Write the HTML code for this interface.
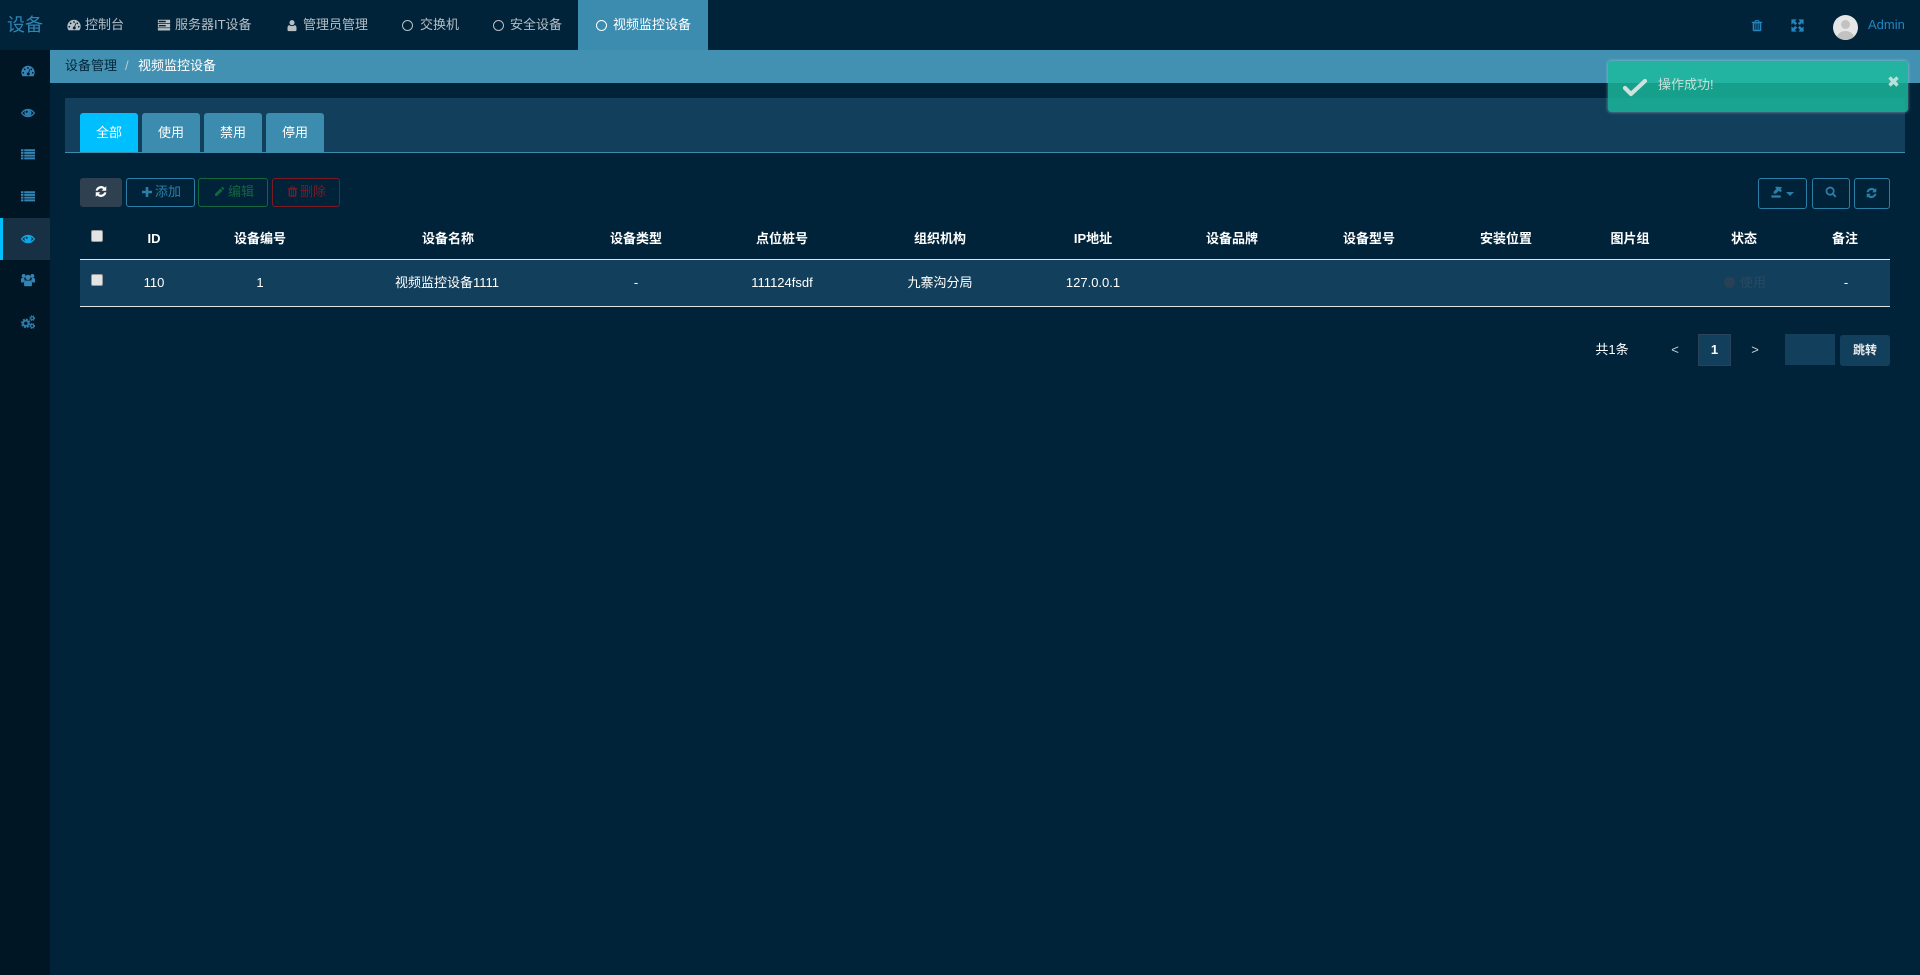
<!DOCTYPE html>
<html lang="zh"><head><meta charset="utf-8"><title>视频监控设备</title>
<style>
*{box-sizing:border-box}
html,body{margin:0;padding:0;width:1920px;height:975px;overflow:hidden;background:#00233a;font:13px/18px "Liberation Sans","Noto Sans CJK SC",sans-serif;color:#fff}
.a{position:absolute}
.t{position:absolute;white-space:nowrap}
.c{position:absolute;white-space:nowrap;transform:translateX(-50%)}
svg{position:absolute;fill:currentColor;display:block}
.th{font-weight:700;top:230px}
.td{top:274px}
.btn{position:absolute;border:1px solid;border-radius:3px;height:29px}
.tab{position:absolute;top:113px;height:39px;width:58px;background:#3c8cb0;border-radius:3px 3px 0 0;text-align:center;line-height:39px}
.cb{position:absolute;width:12px;height:12px;left:91px;background:#e4e4e4;border:1px solid #999;border-radius:2px}
.nv{position:absolute;top:16px;color:#b5bfc4;white-space:nowrap}
.ring{position:absolute;width:11px;height:11px;border:1.5px solid #b5bfc4;border-radius:50%;top:20px}
</style></head><body>
<svg width="0" height="0" style="position:absolute"><defs>
<symbol id="gauge" viewBox="0 0 16 16"><path fill-rule="evenodd" d="M8 2A7.6 7.6 0 0 0 .4 9.6c0 1.5.4 2.800 1.100 3.900.2.3.5.5.9.5h11.200c.4 0 .7-.2.9-.5.7-1.100 1.100-2.400 1.100-3.900A7.600 7.600 0 0 0 8 2zM8 3.600a1 1 0 1 1 0 2 1 1 0 0 1 0-2zM4.200 5.200a1 1 0 1 1 0 2 1 1 0 0 1 0-2zM11.800 5.200a1 1 0 1 1 0 2 1 1 0 0 1 0-2zM2.600 9a1 1 0 1 1 0 2 1 1 0 0 1 0-2zM13.400 9a1 1 0 1 1 0 2 1 1 0 0 1 0-2zM9.800 5.800l.8.3L9.300 10a1.700 1.700 0 1 1-1-.3z"/></symbol>
<symbol id="eye" viewBox="0 0 16 16"><path d="M.8 8C2.600 5.300 5 3.900 8 3.900s5.400 1.400 7.200 4.100c-1.800 2.700-4.200 4.100-7.200 4.100S2.600 10.700.8 8z" fill="none" stroke="currentColor" stroke-width="1.500"/><path fill-rule="evenodd" d="M8 3.800a4.100 4.100 0 1 1 0 8.200 4.100 4.100 0 0 1 0-8.200zM6.500 5.400a1.200 1.200 0 1 0 0 2.400 1.200 1.200 0 0 0 0-2.400z"/></symbol>
<symbol id="list" viewBox="0 0 16 16"><path d="M0 2.500h2.800v2.300H0zM3.700 2.500H16v2.300H3.700zM0 5.600h2.800v2.300H0zM3.700 5.600H16v2.300H3.700zM0 8.700h2.800V11H0zM3.700 8.700H16V11H3.700zM0 11.800h2.800v2.300H0zM3.700 11.800H16v2.300H3.700z"/></symbol>
<symbol id="users" viewBox="0 0 16 16"><circle cx="3" cy="3.400" r="2.200"/><circle cx="13" cy="3.400" r="2.200"/><circle cx="8" cy="5" r="3"/><path d="M0 7.300c0-1 .6-1.600 1.500-1.600h2c.1 1.100.6 2 1.400 2.600-1 .5-1.700 1.400-1.800 2.500H.8C.3 10.800 0 10.500 0 10zM16 7.300c0-1-.6-1.600-1.500-1.600h-2c-.1 1.100-.6 2-1.400 2.600 1 .5 1.700 1.400 1.800 2.500h2.800c.5 0 .8-.3.8-.8zM5.500 8.500h5c1.200 0 2 .8 2 2v3.500c0 .7-.5 1.200-1.200 1.200H4.700c-.7 0-1.200-.5-1.200-1.200v-3.500c0-1.200.8-2 2-2z"/></symbol>
<symbol id="cogs" viewBox="0 0 16 16"><g fill="none" stroke="currentColor"><circle cx="5.500" cy="9.500" r="3" stroke-width="2.200"/><circle cx="5.500" cy="9.500" r="4.600" stroke-width="1.800" stroke-dasharray="2.300 1.300"/><circle cx="12.800" cy="3.600" r="1.700" stroke-width="1.300"/><circle cx="12.800" cy="3.600" r="2.700" stroke-width="1.200" stroke-dasharray="1.300 .9"/><circle cx="12.800" cy="12.500" r="1.700" stroke-width="1.300"/><circle cx="12.800" cy="12.500" r="2.700" stroke-width="1.200" stroke-dasharray="1.300 .9"/></g></symbol>
<symbol id="trash" viewBox="0 0 16 16"><path fill-rule="evenodd" d="M5.500 .8h5l1 2.200H15v1.700h-1.300V14c0 .9-.6 1.600-1.300 1.600H3.600c-.7 0-1.300-.7-1.300-1.600V4.700H1V3h3.500zM6.300 2.200 6 3h4l-.3-.8zM4.400 5.200V13.700h1.500V5.200zM7.200 5.200v8.500h1.600V5.200zM10.100 5.200v8.500h1.500V5.200z"/></symbol>
<symbol id="expand" viewBox="0 0 16 16"><path d="M.5.500h6.500L4.900 2.600 7.500 5.200 5.200 7.500 2.600 4.900.5 7zM15.500.500V7l-2.100-2.100-2.600 2.600-2.300-2.300 2.600-2.600L9 .5zM.5 15.500V9l2.100 2.100 2.600-2.600 2.300 2.300-2.600 2.600L7 15.500zM15.500 15.500H9l2.100-2.100-2.600-2.600 2.300-2.300 2.600 2.600L15.500 9z"/></symbol>
<symbol id="server" viewBox="0 0 16 16"><path fill-rule="evenodd" d="M1 2h14v4H1zM2 3.200v1.600h8V3.200zM1 6.800h14v4H1zM2 8v1.600h8V8zM1 11.600h14v2.700H1z"/></symbol>
<symbol id="user" viewBox="0 0 16 16"><circle cx="8" cy="4.200" r="3.400"/><path d="M4.300 7.500C5.300 8.300 6.600 8.800 8 8.800s2.700-.5 3.700-1.300c1.400.3 2.300 1.700 2.300 3.700v2.800c0 1-.7 1.500-1.500 1.500h-9c-.8 0-1.500-.5-1.500-1.500v-2.800c0-2 .9-3.400 2.300-3.700z"/></symbol>
<symbol id="sync" viewBox="0 0 16 16"><path d="M15 .8v6.200H8.800l2.200-2.200A4.500 4.500 0 0 0 3.800 6.900H.8a7.500 7.500 0 0 1 12.400-4.300zM1 15.200V9h6.200L5 11.200a4.500 4.500 0 0 0 7.200-2.100h3a7.500 7.500 0 0 1-12.400 4.300z"/></symbol>
<symbol id="pencil" viewBox="0 0 16 16"><path d="M11.500 1.500c.4-.4 1-.4 1.400 0l1.600 1.600c.4.400.4 1 0 1.400l-1.300 1.300-3-3zM9.300 3.700l3 3-7.800 7.800H1.500v-3z"/></symbol>
<symbol id="search" viewBox="0 0 16 16"><path fill-rule="evenodd" d="M6.800.8a6 6 0 0 1 5 9.300l3.500 3.500-1.800 1.800-3.500-3.500A6 6 0 1 1 6.800.8zm0 2.300a3.700 3.700 0 1 0 0 7.400 3.700 3.700 0 0 0 0-7.400z"/></symbol>
<symbol id="export" viewBox="0 0 16 16"><path d="M.5 12.500h12.500V15.500H.5zM7.500.8l7.500 1-2.300 2.300 2 2-2.200 2.200-2-2-3.800 3.900H3.500V7.500L7.300 3.700 5.200 2.400z"/></symbol>
<symbol id="plus" viewBox="0 0 10 10"><path d="M3.700 0h2.600v3.700H10v2.600H6.300V10H3.700V6.300H0V3.700h3.700z"/></symbol>
</defs></svg>

<!-- top bar -->
<div class="a" style="left:0;top:0;width:1920px;height:50px;background:#00233a"></div>
<div class="t" style="left:7px;top:12px;font-size:18px;line-height:26px;color:#2d85b5">设备</div>
<svg style="left:67px;top:18px;color:#b5bfc4" width="14" height="14"><use href="#gauge"/></svg>
<div class="nv" style="left:85px">控制台</div>
<svg style="left:157px;top:18px;color:#b5bfc4" width="14" height="14"><use href="#server"/></svg>
<div class="nv" style="left:175px">服务器IT设备</div>
<svg style="left:286px;top:19px;color:#b5bfc4" width="12" height="13"><use href="#user"/></svg>
<div class="nv" style="left:303px">管理员管理</div>
<div class="ring" style="left:402px"></div>
<div class="nv" style="left:420px">交换机</div>
<div class="ring" style="left:493px"></div>
<div class="nv" style="left:510px">安全设备</div>
<div class="a" style="left:578px;top:0;width:130px;height:50px;background:#3c8cb0"></div>
<div class="ring" style="left:596px;border-color:#fff"></div>
<div class="nv" style="left:613px;color:#fff">视频监控设备</div>
<svg style="left:1751px;top:19px;color:#2285bf" width="12" height="13"><use href="#trash"/></svg>
<svg style="left:1791px;top:19px;color:#2285bf" width="13" height="13"><use href="#expand"/></svg>
<div class="a" style="left:1833px;top:15px;width:25px;height:25px;border-radius:50%;background:#e6e6e6;overflow:hidden">
<div class="a" style="left:8px;top:5px;width:9px;height:9px;border-radius:50%;background:#c2c2c2"></div>
<div class="a" style="left:4px;top:16px;width:17px;height:14px;border-radius:50%;background:#c2c2c2"></div></div>
<div class="t" style="left:1868px;top:16px;font-size:13px;color:#2285bf">Admin</div>

<!-- sidebar -->
<div class="a" style="left:0;top:50px;width:50px;height:925px;background:#001624"></div>
<div class="a" style="left:0;top:218px;width:50px;height:42px;background:#173044"></div>
<div class="a" style="left:0;top:218px;width:3px;height:42px;background:#00bfff"></div>
<svg style="left:21px;top:64px;color:#3584b5" width="14" height="14"><use href="#gauge"/></svg>
<svg style="left:21px;top:106px;color:#2c7cab" width="14" height="14"><use href="#eye"/></svg>
<svg style="left:21px;top:147px;color:#3584b5" width="14" height="14"><use href="#list"/></svg>
<svg style="left:21px;top:189px;color:#3584b5" width="14" height="14"><use href="#list"/></svg>
<svg style="left:21px;top:232px;color:#0ca6e8" width="14" height="14"><use href="#eye"/></svg>
<svg style="left:21px;top:273px;color:#3584b5" width="14" height="14"><use href="#users"/></svg>
<svg style="left:21px;top:315px;color:#2c7cab" width="14" height="14"><use href="#cogs"/></svg>

<!-- breadcrumb -->
<div class="a" style="left:50px;top:50px;width:1870px;height:33px;background:#4291b2"></div>
<div class="t" style="left:65px;top:57px;color:#04263a">设备管理</div>
<div class="t" style="left:125px;top:57px;color:#b5cfdc">/</div>
<div class="t" style="left:138px;top:57px;color:#fff">视频监控设备</div>

<!-- panel -->
<div class="a" style="left:65px;top:98px;width:1840px;height:55px;background:#12405c;border-bottom:1px solid #3c8cb0"></div>
<div class="tab" style="left:80px;background:#00bfff">全部</div>
<div class="tab" style="left:142px">使用</div>
<div class="tab" style="left:204px">禁用</div>
<div class="tab" style="left:266px">停用</div>

<!-- toolbar -->
<div class="btn" style="left:80px;top:178px;width:42px;background:#2f4050;border-color:#2f4050"></div>
<svg style="left:95px;top:185px;color:#fff" width="12" height="13"><use href="#sync"/></svg>
<div class="btn" style="left:126px;top:178px;width:69px;border-color:#2c7ea6"></div>
<svg style="left:142px;top:187px;color:#2c7ea6" width="10" height="10"><use href="#plus"/></svg>
<div class="t" style="left:155px;top:183px;color:#2c7ea6">添加</div>
<div class="btn" style="left:198px;top:178px;width:70px;border-color:#14663f"></div>
<svg style="left:214px;top:186px;color:#14663f" width="11" height="11"><use href="#pencil"/></svg>
<div class="t" style="left:228px;top:183px;color:#14663f">编辑</div>
<div class="btn" style="left:272px;top:178px;width:68px;border-color:#7b1a22"></div>
<svg style="left:287px;top:186px;color:#7b1a22" width="11" height="11"><use href="#trash"/></svg>
<div class="t" style="left:300px;top:183px;color:#7b1a22">删除</div>

<div class="btn" style="left:1758px;top:178px;width:49px;height:31px;border-color:#2c7ea6"></div>
<svg style="left:1771px;top:186px;color:#2c7ea6" width="12" height="12"><use href="#export"/></svg>
<div class="a" style="left:1786px;top:192px;border:4px solid transparent;border-top-color:#2c7ea6;border-bottom:0"></div>
<div class="btn" style="left:1812px;top:178px;width:38px;height:31px;border-color:#2c7ea6"></div>
<svg style="left:1825px;top:186px;color:#2c7ea6" width="12" height="12"><use href="#search"/></svg>
<div class="btn" style="left:1854px;top:178px;width:36px;height:31px;border-color:#2c7ea6"></div>
<svg style="left:1866px;top:187px;color:#2c7ea6" width="11" height="12"><use href="#sync"/></svg>

<!-- table -->
<div class="cb" style="top:230px"></div>
<div class="c th" style="left:154px">ID</div>
<div class="c th" style="left:260px">设备编号</div>
<div class="c th" style="left:448px">设备名称</div>
<div class="c th" style="left:636px">设备类型</div>
<div class="c th" style="left:782px">点位桩号</div>
<div class="c th" style="left:940px">组织机构</div>
<div class="c th" style="left:1093px">IP地址</div>
<div class="c th" style="left:1232px">设备品牌</div>
<div class="c th" style="left:1369px">设备型号</div>
<div class="c th" style="left:1506px">安装位置</div>
<div class="c th" style="left:1630px">图片组</div>
<div class="c th" style="left:1744px">状态</div>
<div class="c th" style="left:1845px">备注</div>

<div class="a" style="left:80px;top:259px;width:1810px;height:48px;background:#12405c;border-top:1px solid #dde3e6;border-bottom:1px solid #dde3e6"></div>
<div class="cb" style="top:274px"></div>
<div class="c td" style="left:154px">110</div>
<div class="c td" style="left:260px">1</div>
<div class="c td" style="left:447px">视频监控设备1111</div>
<div class="c td" style="left:636px">-</div>
<div class="c td" style="left:782px">111124fsdf</div>
<div class="c td" style="left:940px">九寨沟分局</div>
<div class="c td" style="left:1093px">127.0.0.1</div>
<div class="a" style="left:1724px;top:277px;width:11px;height:11px;border-radius:50%;background:#2a4054"></div>
<div class="t td" style="left:1740px;color:#2a4860">使用</div>
<div class="c td" style="left:1846px">-</div>

<!-- pagination -->
<div class="c" style="left:1612px;top:341px">共1条</div>
<div class="c" style="left:1675px;top:341px;color:#c8d2d8">&lt;</div>
<div class="a" style="left:1698px;top:334px;width:33px;height:32px;background:#12405c;border:1px solid #2a4358;text-align:center;line-height:30px;font-weight:700">1</div>
<div class="c" style="left:1755px;top:341px;color:#c8d2d8">&gt;</div>
<div class="a" style="left:1785px;top:334px;width:50px;height:31px;background:#12405c"></div>
<div class="a" style="left:1840px;top:335px;width:50px;height:31px;background:#12405c;border-radius:3px;text-align:center;line-height:31px;font-size:12px;font-weight:700;color:#e8e8e8">跳转</div>

<!-- toast -->
<div class="a" style="left:1608px;top:61px;width:300px;height:51px;background:rgba(27,187,157,.82);border-radius:3px;box-shadow:0 0 3px rgba(255,255,255,.45)"></div>
<svg style="left:1622px;top:77px;color:#cfe0dd" width="26" height="20" viewBox="0 0 26 20"><path d="M3 11l6 6L23 4" fill="none" stroke="currentColor" stroke-width="4.200" stroke-linecap="round" stroke-linejoin="round"/></svg>
<div class="t" style="left:1658px;top:76px;color:#c6e0da">操作成功!</div>
<svg style="left:1888px;top:76px;color:#b5e2da" width="11" height="11" viewBox="0 0 11 11"><path d="M1.500 1.500l8 8M9.500 1.500l-8 8" fill="none" stroke="currentColor" stroke-width="3.400"/></svg>
</body></html>
